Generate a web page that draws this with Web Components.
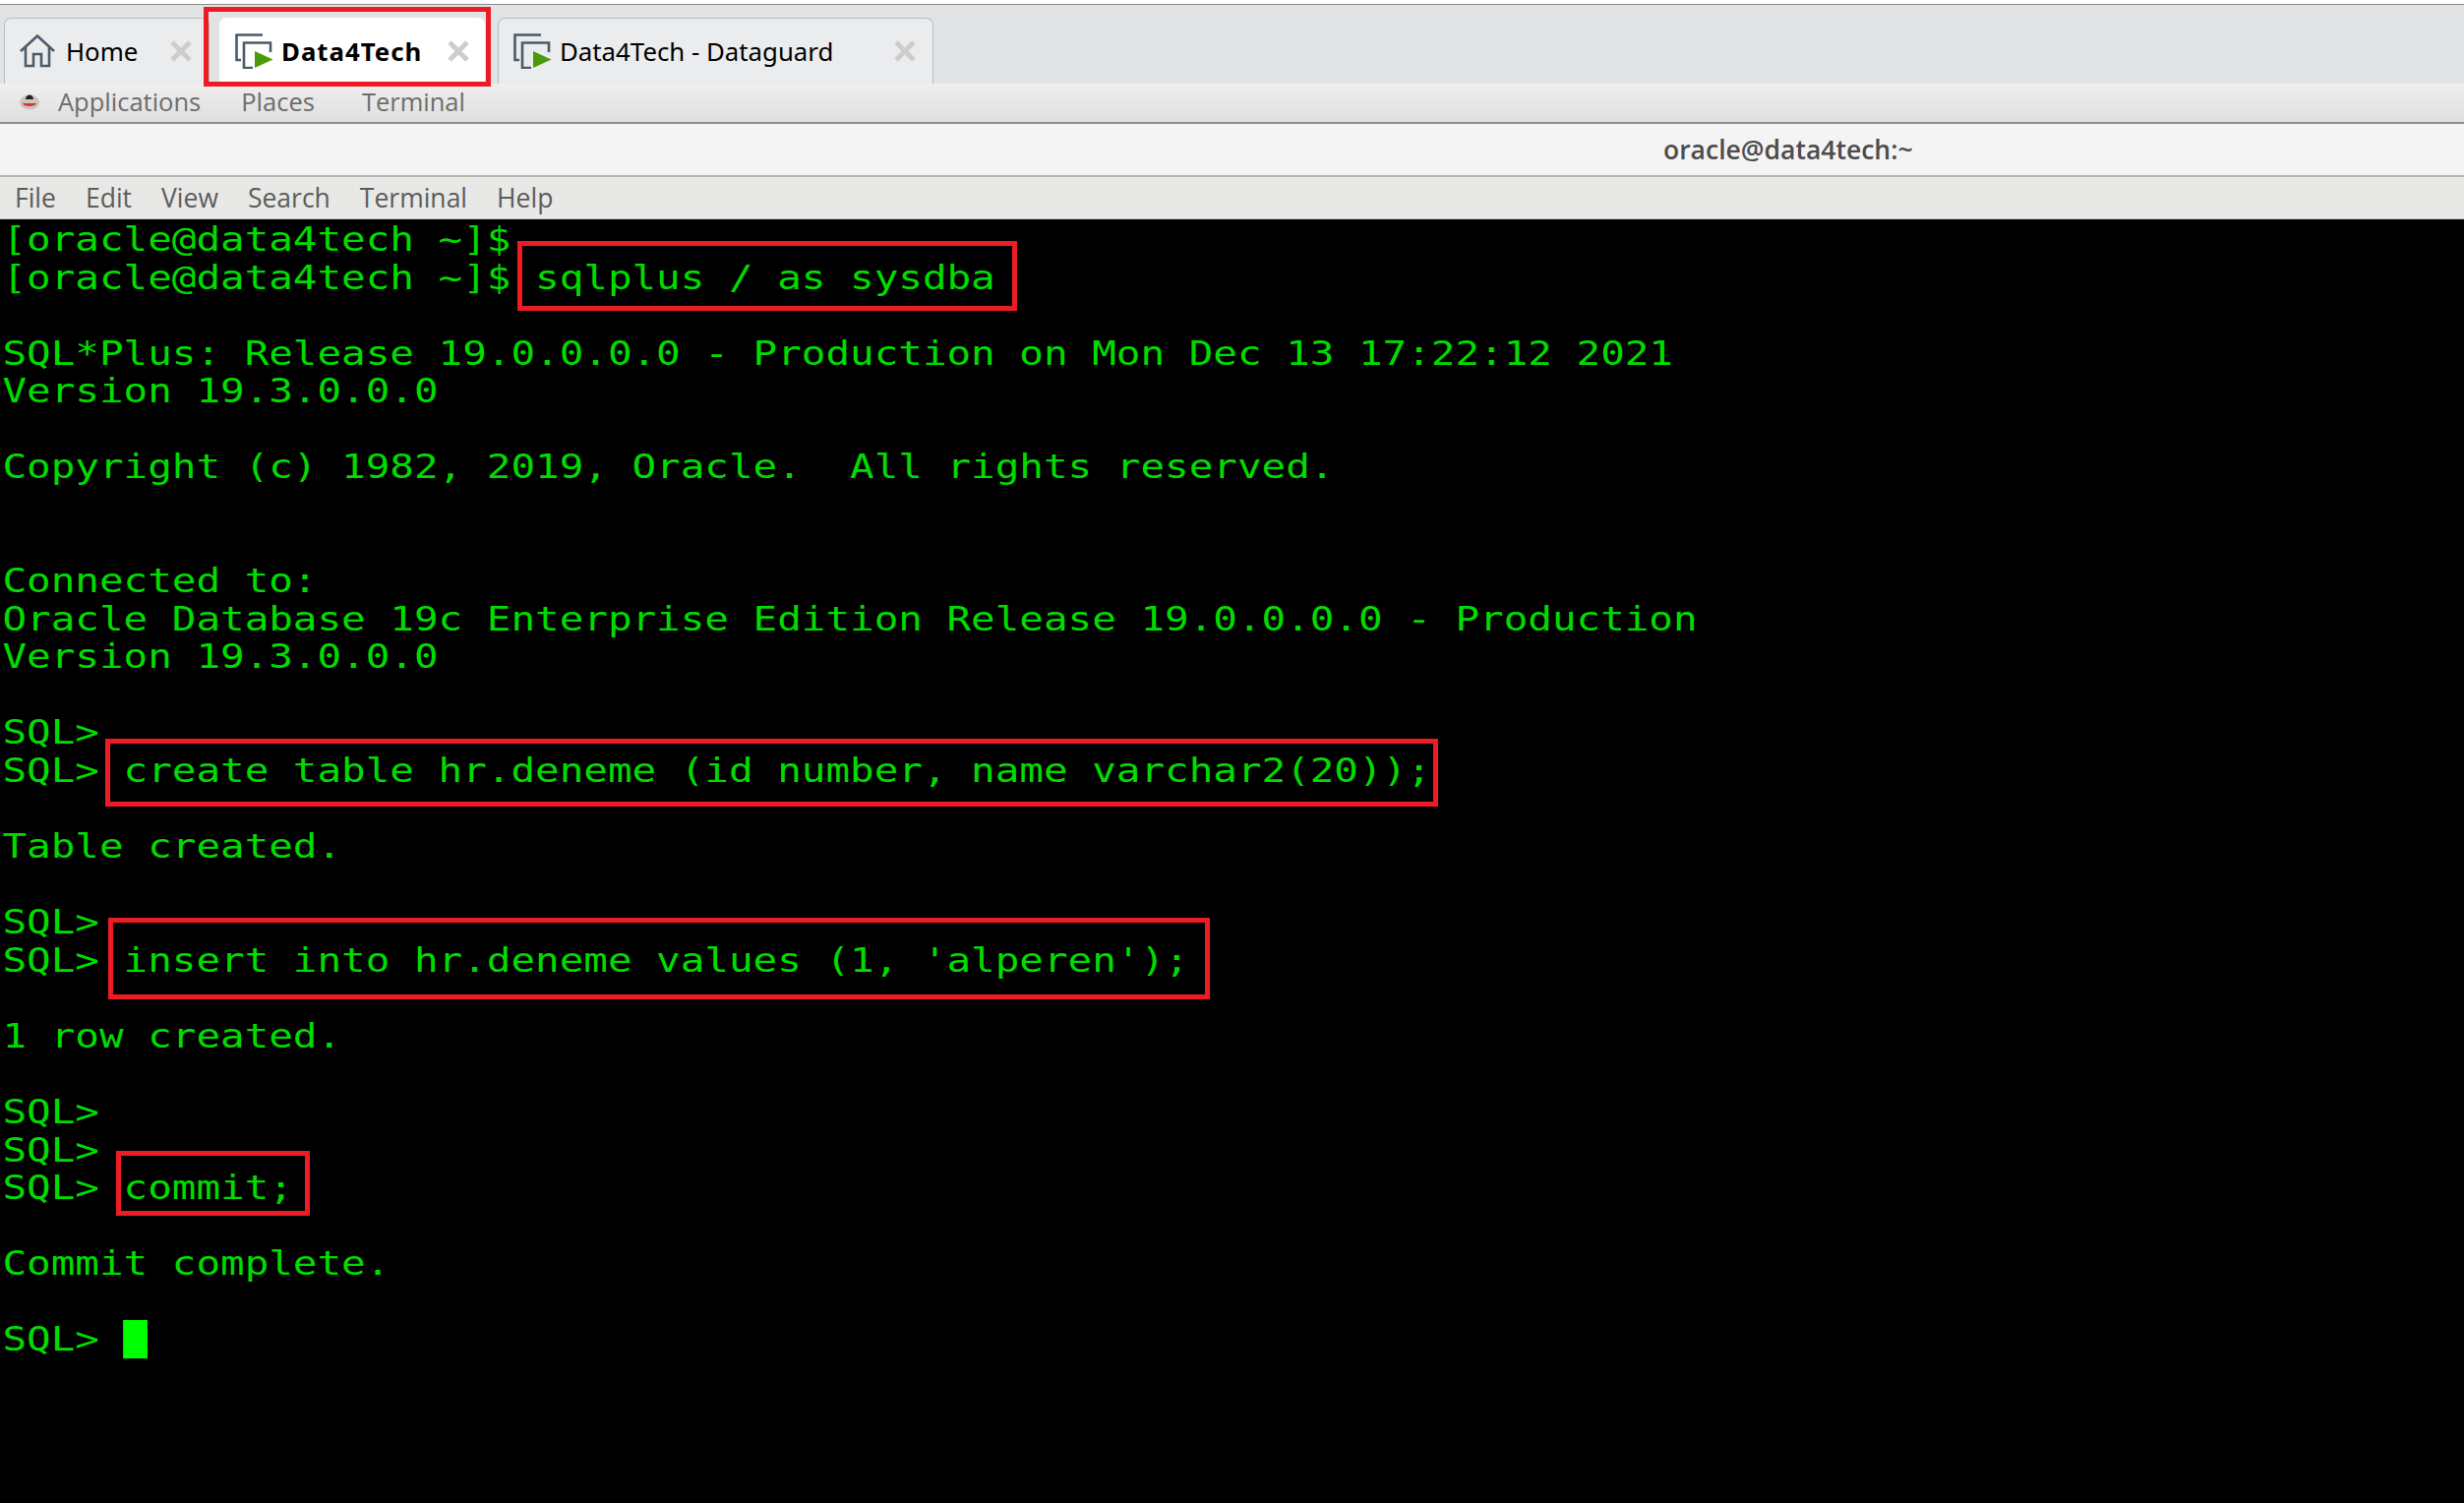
<!DOCTYPE html>
<html>
<head>
<meta charset="utf-8">
<title>Data4Tech</title>
<style>
    html, body { margin: 0; height: 100%; background: #000; overflow: hidden; }
    body { display: flex; flex-direction: column; position: relative; }
    term-window { flex: 1; }
</style>
</head>
<body>
<tab-bar>
    <app-tab icon="home" width="209">Home</app-tab>
    <app-tab icon="session" width="270" active style="margin-left:10px">Data4Tech</app-tab>
    <app-tab icon="session" width="443" style="margin-left:13px">Data4Tech - Dataguard</app-tab>
</tab-bar>
<panel-bar></panel-bar>
<title-bar>oracle@data4tech:~</title-bar>
<menu-bar></menu-bar>
<term-window></term-window>
<red-box x="207" y="7" w="292" h="81"></red-box>
<red-box x="526" y="245" w="508" h="71"></red-box>
<red-box x="107" y="751" w="1355" h="69"></red-box>
<red-box x="110" y="933" w="1120" h="83"></red-box>
<red-box x="118" y="1170" w="197" h="66"></red-box>

<script>
class TabBar extends HTMLElement {
    constructor() {
        super();
        this.attachShadow({ mode: 'open' });
    }

    connectedCallback() {
        this.shadowRoot.innerHTML = `
            <style>
                :host {
                    display: flex;
                    align-items: flex-end;
                    height: 81px;
                    padding: 13px 0 0 4px;
                    box-sizing: border-box;
                    background: #e2e3e5;
                    border-top: 1px solid #8a8a8a;
                    margin-top: 4px;
                    box-shadow: 0 -4px 0 #fff;
                }
            </style>
            <slot></slot>
        `;
    }
}

class AppTab extends HTMLElement {
    constructor() {
        super();
        this.attachShadow({ mode: 'open' });
    }

    icon() {
        if (this.getAttribute('icon') === 'home') {
            return `
                <svg class="home" width="36" height="34" viewBox="0 0 36 34" fill="none" stroke="#4b5b69" stroke-width="2.6">
                    <path d="M1 17 L18 1.5 L35 17"/>
                    <path d="M6 13 V32 H14 V20 H22 V32 H30 V13"/>
                </svg>`;
        }
        return `
            <svg width="40" height="36" viewBox="0 0 40 36" fill="none" stroke="#4b5b69" stroke-width="2.6">
                <path d="M28 1.5 H1.5 V27 H6"/>
                <path d="M18 35 H9 V9.5 H36 V19"/>
                <path d="M20 18 L38.500 26.500 L20 35 Z" fill="#4c9a0c" stroke="none"/>
            </svg>`;
    }

    connectedCallback() {
        const w = this.getAttribute('width');
        this.shadowRoot.innerHTML = `
            <style>
                :host {
                    display: flex;
                    align-items: center;
                    box-sizing: border-box;
                    width: ${w}px;
                    height: 67px;
                    padding: 0 17px 1px 15px;
                    background: #ebecee;
                    border: 1px solid #b9babc;
                    border-bottom: none;
                    border-radius: 7px 7px 0 0;
                    font: 400 25.800px "Noto Sans", sans-serif;
                    color: #000;
                }
                :host([active]) {
                    background: #fff;
                    border-color: #fff;
                    font-weight: 700;
                    letter-spacing: 1px;
                    padding-right: 15px;
                }
                .label { margin-left: 7px; flex: 1; white-space: nowrap; }
                svg { flex: none; }
                .home { margin-right: 4px; }
            </style>
            ${this.icon()}
            <span class="label"><slot></slot></span>
            <svg width="22" height="22" viewBox="0 0 22 22" stroke="#cdcdcd" stroke-width="5">
                <path d="M2 2 L20 20 M20 2 L2 20"/>
            </svg>
        `;
    }
}

class PanelBar extends HTMLElement {
    constructor() {
        super();
        this.attachShadow({ mode: 'open' });
    }

    connectedCallback() {
        this.shadowRoot.innerHTML = `
            <style>
                :host {
                    display: flex;
                    align-items: center;
                    box-sizing: border-box;
                    height: 41px;
                    padding: 0 0 4px 19px;
                    background: linear-gradient(#efefef, #dfdfdf);
                    border-bottom: 2px solid #8e8e8e;
                    font: 400 25.500px "Open Sans", sans-serif;
                    color: #6d6d6d;
                }
                span { margin-right: 41px; }
                span + span { margin-right: 48px; }
                svg { margin-right: 18px; }
            </style>
            <svg width="22" height="18" viewBox="0 0 22 18">
                <ellipse cx="11" cy="10" rx="10" ry="7.500" fill="#c9c4c0"/>
                <path d="M7 7 C7 1 15 1 15 7 Z" fill="#222"/>
                <path d="M4 11 H18 C17 15 5 15 4 11 Z" fill="#d8352c"/>
            </svg>
            <span>Applications</span><span>Places</span><span>Terminal</span>
        `;
    }
}

class TitleBar extends HTMLElement {
    constructor() {
        super();
        this.attachShadow({ mode: 'open' });
    }

    connectedCallback() {
        this.shadowRoot.innerHTML = `
            <style>
                :host {
                    display: flex;
                    align-items: center;
                    box-sizing: border-box;
                    height: 54px;
                    padding-left: 1691px;
                    background: #f4f4f4;
                    border-bottom: 2px solid #b4b4b0;
                    font: 600 26.500px "Open Sans", sans-serif;
                    color: #4c4c4c;
                }
            </style>
            <slot></slot>
        `;
    }
}

class MenuBar extends HTMLElement {
    constructor() {
        super();
        this.attachShadow({ mode: 'open' });
    }

    connectedCallback() {
        const items = ['File', 'Edit', 'View', 'Search', 'Terminal', 'Help'];
        this.shadowRoot.innerHTML = `
            <style>
                :host {
                    display: flex;
                    align-items: center;
                    gap: 30px;
                    box-sizing: border-box;
                    height: 43px;
                    padding: 0 0 0 15px;
                    background: #e8e8e6;
                    border-bottom: 1px solid #c9c9c6;
                    font: 400 26.500px "Open Sans", sans-serif;
                    color: #5c5c5c;
                }
            </style>
            ${items.map(i => `<span>${i}</span>`).join('')}
        `;
    }
}

class TermWindow extends HTMLElement {
    constructor() {
        super();
        this.attachShadow({ mode: 'open' });
    }

    connectedCallback() {
        const text = `[oracle@data4tech ~]$
[oracle@data4tech ~]$ sqlplus / as sysdba

SQL*Plus: Release 19.0.0.0.0 - Production on Mon Dec 13 17:22:12 2021
Version 19.3.0.0.0

Copyright (c) 1982, 2019, Oracle.  All rights reserved.


Connected to:
Oracle Database 19c Enterprise Edition Release 19.0.0.0.0 - Production
Version 19.3.0.0.0

SQL>
SQL> create table hr.deneme (id number, name varchar2(20));

Table created.

SQL>
SQL> insert into hr.deneme values (1, 'alperen');

1 row created.

SQL>
SQL>
SQL> commit;

Commit complete.

SQL> <span class="cursor"> </span>`;
        this.shadowRoot.innerHTML = `
            <style>
                :host {
                    display: block;
                    background: #000;
                    overflow: hidden;
                    min-height: 0;
                }
                /* the screenshot is stretched wider than it is tall, so the glyphs are too */
                pre {
                    margin: 0;
                    padding: 2px 0 0 2px;
                    font: 400 33px/38.56px "DejaVu Sans Mono", monospace;
                    color: #00dc00;
                    transform: scaleX(1.239);
                    transform-origin: 0 0;
                }
                .cursor { background: #00ff00; }
            </style>
            <pre>${text}</pre>
        `;
    }
}

class RedBox extends HTMLElement {
    constructor() {
        super();
        this.attachShadow({ mode: 'open' });
    }

    connectedCallback() {
        const a = n => this.getAttribute(n);
        this.shadowRoot.innerHTML = `
            <style>
                :host {
                    position: absolute;
                    left: ${a('x')}px;
                    top: ${a('y')}px;
                    width: ${a('w')}px;
                    height: ${a('h')}px;
                    box-sizing: border-box;
                    border: 5px solid #ed1c24;
                    pointer-events: none;
                }
            </style>
        `;
    }
}

customElements.define('tab-bar', TabBar);
customElements.define('app-tab', AppTab);
customElements.define('panel-bar', PanelBar);
customElements.define('title-bar', TitleBar);
customElements.define('menu-bar', MenuBar);
customElements.define('term-window', TermWindow);
customElements.define('red-box', RedBox);
</script>
</body>
</html>
